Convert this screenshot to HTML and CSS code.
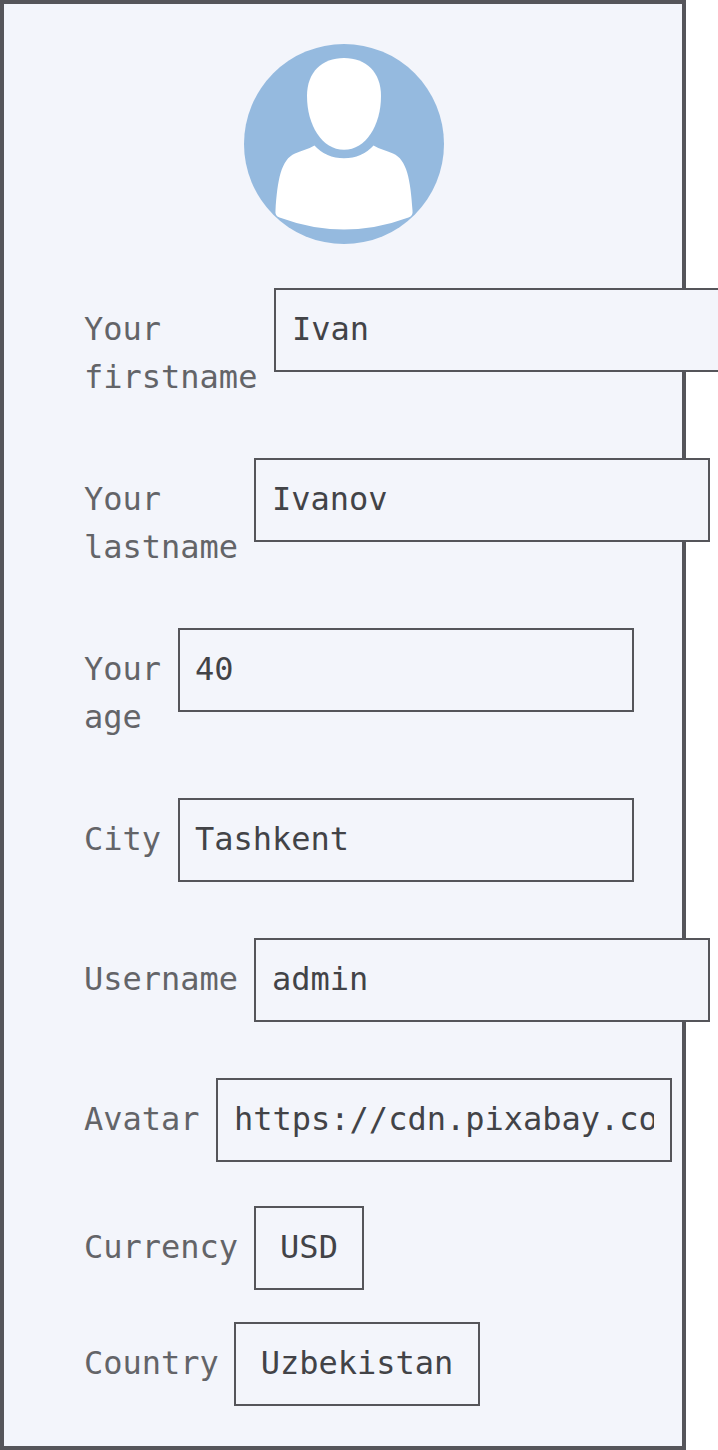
FILE: index.html
```html
<!DOCTYPE html>
<html lang="en">
<head>
<meta charset="utf-8">
<title>Profile</title>
<link rel="stylesheet" href="styles.css">
</head>
<body>
<main class="card">
  <svg class="avatar" viewBox="0 0 200 200" role="img" aria-label="Avatar">
    <circle cx="100" cy="100" r="100" fill="#95badf"/>
    <path fill="#fff" d="M100 14C122 14 137 28 137 52C137 81 122 105.800 100 105.800C78 105.800 63 81 63 52C63 28 78 14 100 14Z"/>
    <path fill="#fff" d="M70.500 101.500Q82 114.300 100 114.300Q118 114.300 129.500 101.500C136 105.300 142 106.500 149 109.500C163 115.500 166.500 136 168.500 166.500Q169.300 171.800 164.500 173.500Q132 185.500 100 185.500Q68 185.500 35.500 173.500Q30.700 171.800 31.500 166.500C33.500 136 37 115.500 51 109.500C58 106.500 64 105.300 70.500 101.500Z"/>
  </svg>
  <form class="form">
    <label class="field"><span class="label chars-9">Your firstname</span><input class="input" value="Ivan"></label>
    <label class="field"><span class="label chars-8">Your lastname</span><input class="input" value="Ivanov"></label>
    <label class="field"><span class="label chars-4">Your age</span><input class="input input-short" value="40"></label>
    <label class="field"><span class="label chars-4">City</span><input class="input input-short" value="Tashkent"></label>
    <label class="field"><span class="label chars-8">Username</span><input class="input" value="admin"></label>
    <label class="field field-avatar"><span class="label chars-6">Avatar</span><input class="input" value="https://cdn.pixabay.com/photo/2015/10/05/22/37/blank-profile-picture-973460_1280.png"></label>
    <div class="field field-select"><span class="label chars-8">Currency</span><button type="button" class="select currency">USD</button></div>
    <div class="field field-select"><span class="label chars-7">Country</span><button type="button" class="select country">Uzbekistan</button></div>
  </form>
</main>
</body>
</html>
```
FILE: styles.css
```css
* {
  box-sizing: border-box;
}

body {
  margin: 0;
  background: #fff;
  overflow: hidden;
}

.card {
  display: flex;
  flex-direction: column;
  width: 686px;
  height: 1450px;
  padding: 40px 80px 8px;
  border: 4px solid #55555a;
  background: #f3f5fb;
  font: 32px/48px "DejaVu Sans Mono", monospace;
  color: #636468;
}

.avatar {
  display: block;
  flex: none;
  width: 200px;
  height: 200px;
  margin: 0 0 44px 160px;
}

.field {
  display: flex;
  align-items: flex-start;
  margin-bottom: 56px;
}

.field-avatar {
  margin-bottom: 44px;
}

.field-select {
  margin-bottom: 32px;
}

.label {
  flex: none;
  padding: 17px 16px 1px 0;
}

.chars-4 { width: 94px; }
.chars-6 { width: 132px; }
.chars-7 { width: 150px; }
.chars-8 { width: 170px; }
.chars-9 { width: 190px; }

.input,
.select {
  flex: none;
  height: 84px;
  margin: 0;
  border: 2px solid #55555a;
  border-radius: 0;
  background: #f3f5fb;
  font: inherit;
  color: #424347;
}

.input {
  width: 456px;
  padding: 0 16px 2px;
}

.input-short {
  padding-left: 15px;
}

.select {
  padding: 0 0 2px;
  text-align: center;
}

.currency { width: 110px; }
.country { width: 246px; }
```
